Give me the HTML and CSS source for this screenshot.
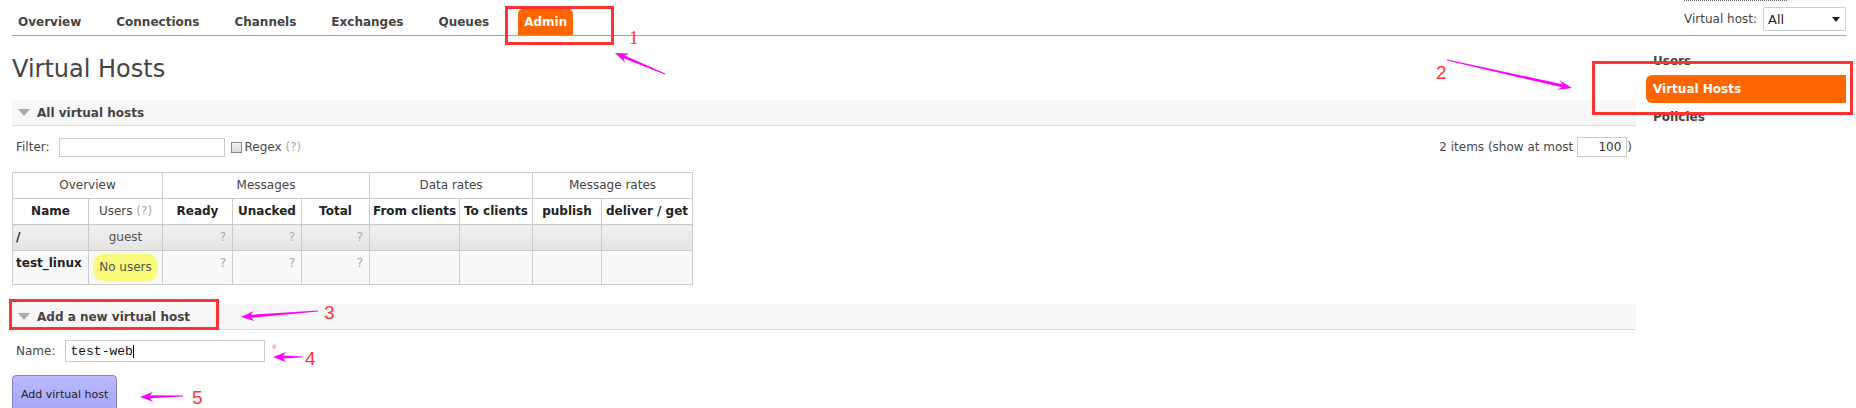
FILE: index.html
```html
<!DOCTYPE html>
<html lang="en">
<head>
    <meta charset="UTF-8">
    <title>RabbitMQ Management - Virtual Hosts</title>
    <link rel="stylesheet" href="styles.css">
</head>
<body>

<!-- Top menu -->
<div class="topbar">
    <ul class="menu">
        <li><a href="#">Overview</a></li>
        <li><a href="#">Connections</a></li>
        <li><a href="#">Channels</a></li>
        <li><a href="#">Exchanges</a></li>
        <li><a href="#">Queues</a></li>
        <li class="active"><a href="#">Admin</a></li>
    </ul>
    <div class="vhost-box">
        <div class="login-line"></div>
        <div class="vhost">
            <span>Virtual host:</span>
            <div class="select"><span>All</span><i class="select-arrow"></i></div>
        </div>
    </div>
</div>

<div class="page">
    <div class="main">
        <h1>Virtual Hosts</h1>

        <!-- All virtual hosts -->
        <div class="section">
            <h2><i class="tri"></i>All virtual hosts</h2>
            <div class="filter-row">
                <div class="filter">
                    <label>Filter:</label>
                    <input type="text" class="filter-input">
                    <input type="checkbox" class="check">
                    <span>Regex <span class="help">(?)</span></span>
                </div>
                <div class="count">
                    2 items (show at most <input type="text" class="limit" value="100">)
                </div>
            </div>

            <table class="list">
                <colgroup>
                    <col class="c-name"><col class="c-users">
                    <col class="c-ready"><col class="c-unacked"><col class="c-total">
                    <col class="c-from"><col class="c-to">
                    <col class="c-pub"><col class="c-get">
                </colgroup>
                <thead>
                    <tr>
                        <th colspan="2" class="group">Overview</th>
                        <th colspan="3" class="group">Messages</th>
                        <th colspan="2" class="group">Data rates</th>
                        <th colspan="2" class="group">Message rates</th>
                    </tr>
                    <tr>
                        <th>Name</th>
                        <th class="light">Users <span class="help">(?)</span></th>
                        <th>Ready</th>
                        <th>Unacked</th>
                        <th>Total</th>
                        <th>From clients</th>
                        <th>To clients</th>
                        <th>publish</th>
                        <th>deliver / get</th>
                    </tr>
                </thead>
                <tbody>
                    <tr class="alt1">
                        <td class="name">/</td>
                        <td class="users">guest</td>
                        <td class="num">?</td>
                        <td class="num">?</td>
                        <td class="num">?</td>
                        <td></td><td></td><td></td><td></td>
                    </tr>
                    <tr class="alt2">
                        <td class="name">test_linux</td>
                        <td class="users pill-cell"><span class="pill">No users</span></td>
                        <td class="num">?</td>
                        <td class="num">?</td>
                        <td class="num">?</td>
                        <td></td><td></td><td></td><td></td>
                    </tr>
                </tbody>
            </table>
        </div>

        <!-- Add a new virtual host -->
        <div class="section add">
            <h2><i class="tri"></i>Add a new virtual host</h2>
            <div class="form-row">
                <label>Name:</label>
                <span class="field">
                    <input type="text" class="name-input" value="test-web">
                    <span class="caret"></span>
                </span>
                <span class="mand">*</span>
            </div>
            <button class="submit">Add virtual host</button>
        </div>
    </div>

    <ul class="side">
        <li><a href="#">Users</a></li>
        <li class="active"><a href="#">Virtual Hosts</a></li>
        <li><a href="#">Policies</a></li>
    </ul>
</div>

<!-- Screenshot annotations -->
<svg class="notes" width="1856" height="408" viewBox="0 0 1856 408">
    <g class="box">
        <rect x="506.5" y="7.5" width="106" height="36"/>
        <rect x="1593.5" y="62.5" width="258" height="51"/>
        <rect x="10.5" y="300.5" width="207" height="28"/>
    </g>
    <g class="arrow">
        <polygon points="665.19,73.54 624.78,55.52 628.94,53.39 615,53 625.07,62.61 623.62,58.28 664.81,74.46"/>
        <polygon points="1447.11,59.51 1562.57,84.35 1559.43,80.06 1572,88 1557.25,89.82 1561.91,87.27 1446.89,60.49"/>
        <polygon points="317.96,310.5 250.85,314.72 253.57,311 241,317 254.35,320.98 251.09,317.72 318.04,311.5"/>
        <polygon points="302,356.5 283,355.5 286,352 273,357 286,362 283,358.5 302,357.5"/>
        <polygon points="183,395.5 150,395.3 153,391.7 140,397 153,401.7 150,398.3 183,396.5"/>
    </g>
    <g class="num-label">
        <text x="629" y="44" class="serif">1</text>
        <text x="1436" y="79">2</text>
        <text x="324" y="319">3</text>
        <text x="305" y="365">4</text>
        <text x="192" y="404">5</text>
    </g>
</svg>

</body>
</html>
```

FILE: styles.css
```css
html {
    overflow: hidden;
}
body {
    margin: 0;
    font-family: "DejaVu Sans", Verdana, sans-serif;
    font-size: 12px;
    color: #484848;
    background: #fff;
    position: relative;
}
a {
    text-decoration: none;
    color: inherit;
}
ul {
    list-style: none;
    margin: 0;
    padding: 0;
}

/* top menu */
.topbar {
    display: flex;
    justify-content: space-between;
    align-items: flex-end;
    margin: 0 10px 0 12px;
    height: 35px;
    border-bottom: 1px solid #f39131;
}
.menu {
    display: flex;
}
.menu li {
    margin-right: 23px;
}
.menu li a {
    display: block;
    padding: 6px 6px;
    line-height: 14px;
    font-weight: bold;
    color: #444;
}
.menu li.active a {
    background: #f60;
    color: #fff;
    border-radius: 5px 5px 0 0;
}
.vhost-box {
    display: flex;
    flex-direction: column;
    margin-bottom: 4px;
}
.login-line {
    width: 103px;
    border-top: 1px dotted #666;
}
.vhost {
    display: flex;
    align-items: center;
    margin-top: 6px;
    color: #444;
}
.select {
    display: flex;
    align-items: center;
    justify-content: space-between;
    margin-left: 6px;
    width: 83px;
    height: 24px;
    box-sizing: border-box;
    padding: 0 5px 0 4px;
    border: 1px solid #ccc;
    border-radius: 2px;
    color: #222;
    font-size: 13px;
}
.select-arrow {
    width: 0;
    height: 0;
    border-left: 4px solid transparent;
    border-right: 4px solid transparent;
    border-top: 5px solid #222;
}

/* page */
.page {
    display: flex;
    margin: 0 10px 0 12px;
}
.main {
    flex: 1;
}
h1 {
    margin: 19px 0 17px;
    font-size: 24px;
    line-height: 28px;
    font-weight: normal;
    color: #444;
}
.section h2 {
    display: flex;
    align-items: center;
    margin: 0;
    height: 25px;
    padding-left: 6px;
    background: #f7f7f7;
    border-bottom: 1px solid #ddd;
    font-size: 12px;
    color: #444;
}
.tri {
    width: 0;
    height: 0;
    margin-right: 7px;
    border-left: 6px solid transparent;
    border-right: 6px solid transparent;
    border-top: 7px solid #aaa;
}
.help {
    color: #aaa;
}

/* filter */
.filter-row {
    display: flex;
    justify-content: space-between;
    align-items: center;
    margin-top: 11px;
    height: 20px;
    padding: 0 4px;
}
.filter {
    display: flex;
    align-items: center;
}
.filter-input {
    margin: 0 6px 0 9px;
    width: 166px;
    height: 19px;
    box-sizing: border-box;
    border: 1px solid #ccc;
}
.check {
    appearance: none;
    margin: 0 3px 0 0;
    width: 11px;
    height: 11px;
    border: 1px solid #888;
    background: linear-gradient(#f4f4f4, #d8d8d8);
}
.count {
    display: flex;
    align-items: center;
}
.limit {
    margin-left: 4px;
    width: 50px;
    height: 20px;
    box-sizing: border-box;
    padding: 0 5px;
    border: 1px solid #ccc;
    text-align: right;
    font-family: "DejaVu Sans", Verdana, sans-serif;
    font-size: 12px;
    color: #333;
}

/* table */
.list {
    margin-top: 15px;
    width: 681px;
    table-layout: fixed;
    border-collapse: collapse;
}
.c-name { width: 76px; }
.c-users { width: 74px; }
.c-ready { width: 70px; }
.c-unacked { width: 69px; }
.c-total { width: 68px; }
.c-from { width: 90px; }
.c-to { width: 73px; }
.c-pub { width: 69px; }
.c-get { width: 91px; }
.list th, .list td {
    border: 1px solid #ccc;
    padding: 4px 3px;
    line-height: 17px;
    white-space: nowrap;
    vertical-align: top;
}
.list th {
    text-align: center;
    color: #222;
}
.list th.group, .list th.light {
    font-weight: normal;
    color: #444;
}
.alt1 td {
    background: linear-gradient(#f2f2f2, #e3e3e3);
}
.alt2 td {
    background: #f8f8f8;
}
.list td.name {
    font-weight: bold;
    color: #222;
}
.list td.users {
    text-align: center;
    color: #555;
}
.list td.num {
    text-align: right;
    padding-right: 6px;
    color: #aaa;
}
.list td.pill-cell {
    padding: 3px;
}
.pill {
    display: inline-block;
    padding: 6px 6px;
    line-height: 15px;
    border-radius: 10px;
    background: #fafa7c;
    color: #555;
}

/* add form */
.section.add {
    margin-top: 19px;
}
.form-row {
    display: flex;
    align-items: center;
    margin-top: 10px;
    padding-left: 4px;
}
.field {
    position: relative;
    margin-left: 10px;
}
.name-input {
    display: block;
    width: 200px;
    height: 22px;
    box-sizing: border-box;
    padding: 0 4px;
    border: 1px solid #ccc;
    font-family: "Liberation Mono", monospace;
    font-size: 13px;
    color: #111;
}
.caret {
    position: absolute;
    left: 68px;
    top: 5px;
    width: 1px;
    height: 13px;
    background: #000;
}
.mand {
    margin: -6px 0 0 6px;
    color: #f88;
    font-size: 11px;
}
.submit {
    display: block;
    margin-top: 13px;
    padding: 0 8px;
    height: 38px;
    border: 1px solid #8585c8;
    border-radius: 4px;
    background: linear-gradient(#babaff, #a5a5f2);
    font-family: "DejaVu Sans", Verdana, sans-serif;
    font-size: 11px;
    white-space: nowrap;
    color: #222;
}

/* side menu */
.side {
    width: 200px;
    margin: 11px 0 0 10px;
}
.side li a {
    display: block;
    padding: 0 7px;
    line-height: 28px;
    font-weight: bold;
    color: #444;
}
.side li.active a {
    background: #f60;
    color: #fff;
    border-radius: 6px 0 0 6px;
}

/* annotations */
.notes {
    position: absolute;
    left: 0;
    top: 0;
    pointer-events: none;
}
.notes .box rect {
    fill: none;
    stroke: #f33;
    stroke-width: 3;
}
.notes .arrow polygon {
    fill: #f0f;
}
.notes .num-label text {
    fill: #f33;
    font-family: "Liberation Sans", Arial, sans-serif;
    font-size: 19px;
}
.notes .num-label text.serif {
    font-family: "Liberation Serif", serif;
}
```
